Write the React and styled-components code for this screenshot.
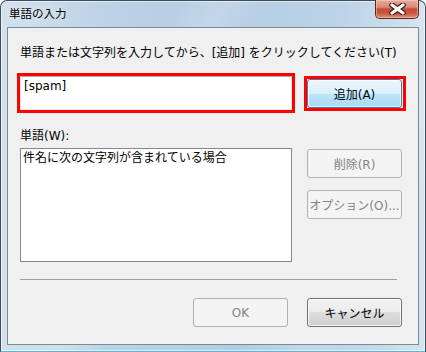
import React from 'react';
import styled, { createGlobalStyle } from 'styled-components';

const GlobalStyle = createGlobalStyle`
  html, body {
    margin: 0;
    padding: 0;
    background: #ffffff;
  }
  * {
    box-sizing: border-box;
  }
`;

const UI_FONT = `"DejaVu Sans", "Noto Sans CJK JP", sans-serif`;

const Window = styled.div`
  position: relative;
  display: flex;
  flex-direction: column;
  width: 426px;
  height: 352px;
  border: 1px solid #3e4c5b;
  border-bottom-color: #58b8dc;
  border-radius: 7px 7px 0 0;
  background:
    linear-gradient(115deg, rgba(255,255,255,0) 30%, rgba(255,255,255,0.18) 38%, rgba(255,255,255,0) 46%, rgba(255,255,255,0) 70%, rgba(255,255,255,0.15) 80%, rgba(255,255,255,0) 90%),
    linear-gradient(to right, #d3e1ed 0%, #bcd2e5 25%, #b5cde3 55%, #bcd3e7 80%, #d4e3ef 100%);
  box-shadow: inset 0 0 0 1px rgba(255, 255, 255, 0.55);
  font-family: ${UI_FONT};
  font-size: 12px;
  color: #000;
`;

const TitleBar = styled.div`
  position: relative;
  display: flex;
  align-items: center;
  height: 26px;
  padding: 0 0 3px 8px;
`;

const TitleText = styled.span`
  font-family: "Noto Sans CJK JP", sans-serif;
  font-size: 11.5px;
  line-height: 14px;
  color: #000;
  text-shadow: 0 0 6px rgba(255, 255, 255, 0.9);
`;

const CloseButton = styled.div`
  position: absolute;
  top: -1px;
  right: 6px;
  width: 44px;
  height: 19px;
  display: flex;
  align-items: center;
  justify-content: center;
  border: 1px solid #5a2721;
  border-top: none;
  border-radius: 0 0 5px 5px;
  background: linear-gradient(#e7aa9b 0%, #d98a78 40%, #c44c35 50%, #c95a40 75%, #e0937a 100%);
  box-shadow: inset 0 0 0 1px rgba(255, 220, 210, 0.45);
`;

const Client = styled.div`
  flex: 1;
  display: flex;
  flex-direction: column;
  margin: 0 6px 6px;
  padding: 17px 16px 0 12px;
  background: #f0f0f0;
  border: 1px solid #7c8a98;
`;

const Label = styled.div`
  line-height: 16px;
  margin-top: ${(p) => p.$top || 0}px;
  white-space: nowrap;
`;

const Row = styled.div`
  display: grid;
  grid-template-columns: 272px 95px;
  column-gap: 15px;
  align-items: ${(p) => p.$align || 'start'};
  margin-top: ${(p) => p.$top || 0}px;
`;

const Highlight = styled.div`
  position: relative;

  &::after {
    content: '';
    position: absolute;
    inset: -3px -4px -3px -3px;
    border: 3px solid #ff0000;
    pointer-events: none;
  }
`;

const TextBox = styled.div`
  height: 34px;
  padding: 1px 3px;
  line-height: 16px;
  background: #fff;
  border: 1px solid #e2e3ea;
  border-top-color: #abadb3;
  border-bottom-color: #e3e9ef;
  outline: 3px solid #ff0000;
`;

const ListBox = styled.div`
  height: 114px;
  padding: 1px 2px;
  line-height: 16px;
  background: #fff;
  border: 1px solid #828790;
`;

const ButtonColumn = styled.div`
  display: flex;
  flex-direction: column;
  gap: 12px;
  margin-top: 1px;
`;

const Button = styled.div`
  width: 95px;
  height: 29px;
  display: flex;
  align-items: center;
  justify-content: center;
  white-space: nowrap;
  border-radius: 3px;
  font-size: 12px;
  border: 1px solid #707070;
  color: #000;
  background: linear-gradient(#f2f2f2 0%, #ebebeb 50%, #dddddd 50%, #cfcfcf 100%);
  box-shadow: inset 0 0 0 1px rgba(255, 255, 255, 0.8);

  ${(p) =>
    p.$variant === 'default' &&
    `
    border-color: #3c7fb1;
    background: linear-gradient(#eaf6fd 0%, #d9f0fc 50%, #bee6fd 50%, #a7d9f5 100%);
    box-shadow: inset 0 0 0 1px rgba(255, 255, 255, 0.7);
  `}

  ${(p) =>
    p.$variant === 'disabled' &&
    `
    border-color: #adb2b5;
    background: #f4f4f4;
    color: #838383;
    box-shadow: none;
  `}
`;

const Separator = styled.div`
  height: 1px;
  margin: 17px 5px 0 0;
  background: #a0a0a0;
`;

const Footer = styled.div`
  display: flex;
  justify-content: flex-end;
  gap: 19px;
  margin-top: 18px;
`;

const CloseGlyph = () => (
  <svg width="17" height="12" viewBox="0 0 17 12">
    <path d="M3 2 L14 10 M14 2 L3 10" stroke="#3a1a16" strokeWidth="5.5" strokeLinecap="round" />
    <path d="M3 2 L14 10 M14 2 L3 10" stroke="#ffffff" strokeWidth="3.2" strokeLinecap="round" />
  </svg>
);

export default function App() {
  return (
    <>
      <GlobalStyle />
      <Window>
        <TitleBar>
          <TitleText>単語の入力</TitleText>
          <CloseButton>
            <CloseGlyph />
          </CloseButton>
        </TitleBar>
        <Client>
          <Label>単語または文字列を入力してから、[追加] をクリックしてください(T)</Label>
          <Row $top={15} $align="center">
            <TextBox>[spam]</TextBox>
            <Highlight>
              <Button $variant="default">追加(A)</Button>
            </Highlight>
          </Row>
          <Label $top={18}>単語(W):</Label>
          <Row $top={4}>
            <ListBox>件名に次の文字列が含まれている場合</ListBox>
            <ButtonColumn>
              <Button $variant="disabled">削除(R)</Button>
              <Button $variant="disabled">オプション(O)...</Button>
            </ButtonColumn>
          </Row>
          <Separator />
          <Footer>
            <Button $variant="disabled">OK</Button>
            <Button>キャンセル</Button>
          </Footer>
        </Client>
      </Window>
    </>
  );
}
